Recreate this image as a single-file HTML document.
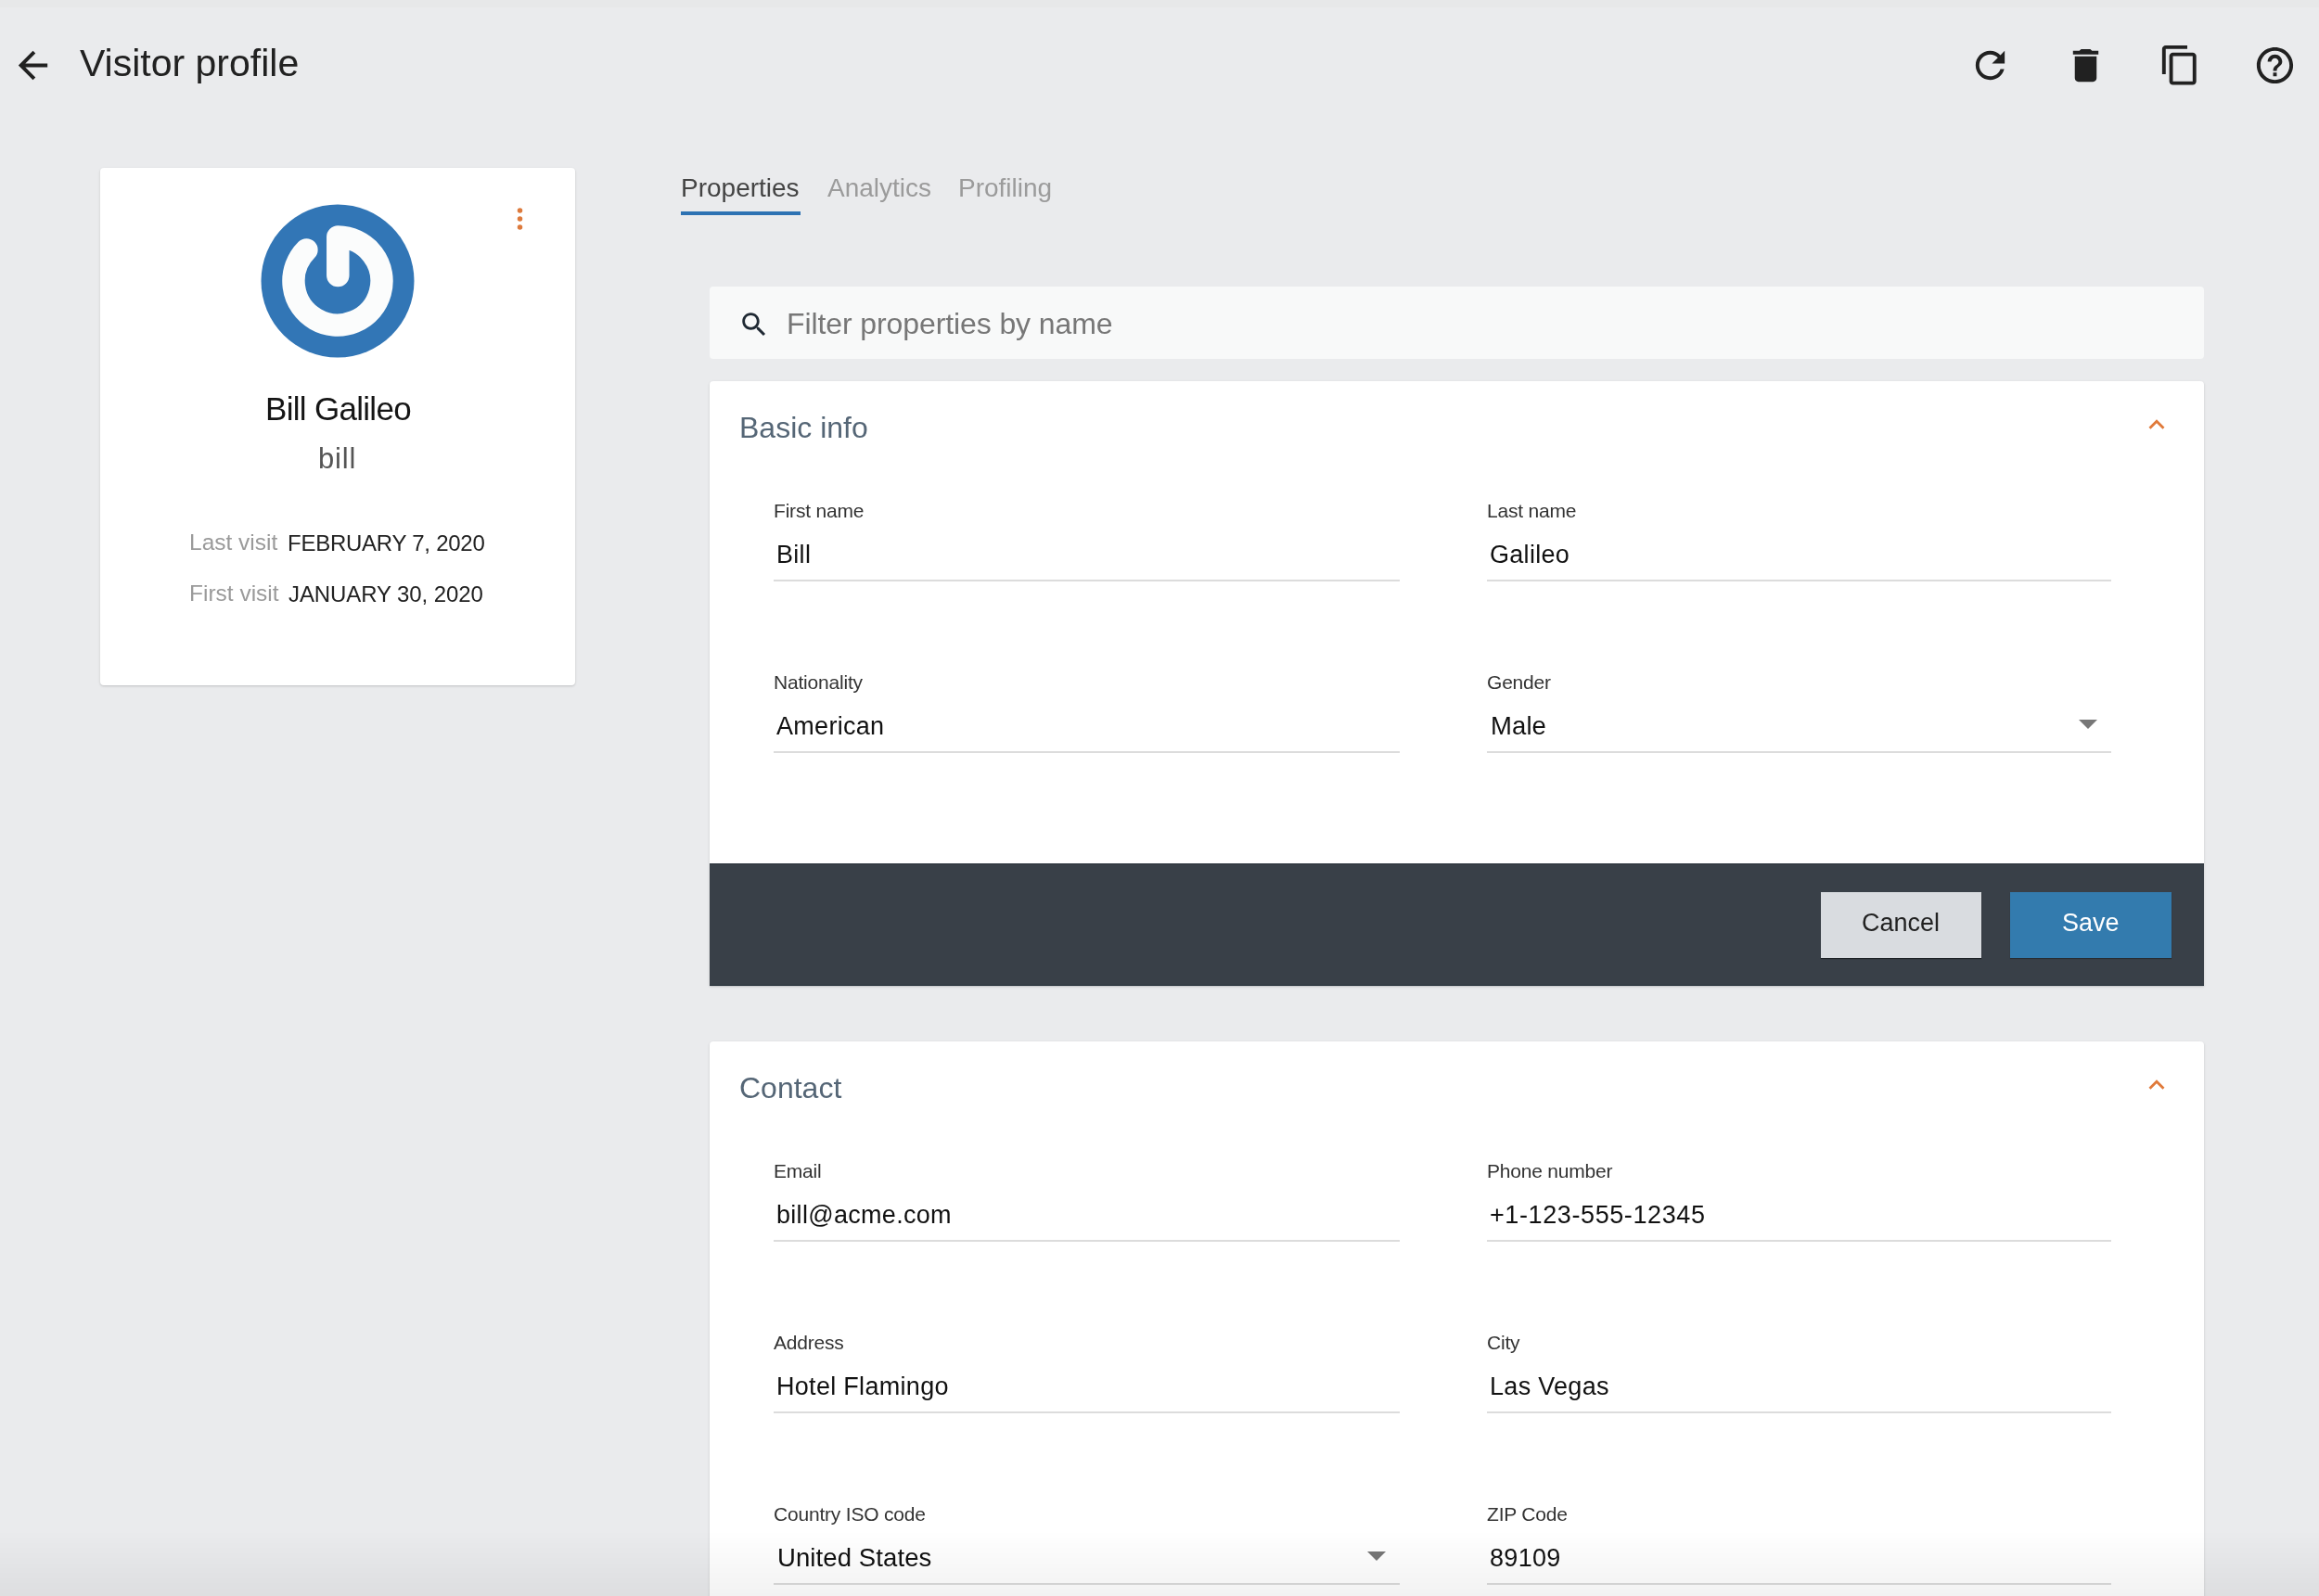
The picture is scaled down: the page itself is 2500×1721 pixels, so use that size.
<!DOCTYPE html>
<html><head><meta charset="utf-8"><title>Visitor profile</title>
<style>
html,body{margin:0;padding:0}
body{width:2500px;height:1721px;overflow:hidden;position:relative;background:#eaebed;font-family:"Liberation Sans",sans-serif}
.t{position:absolute;line-height:1;white-space:nowrap;will-change:transform}
.abs{position:absolute}
.card{position:absolute;background:#fff;border-radius:4px;box-shadow:0 1px 3px rgba(0,0,0,0.14),0 1px 1px rgba(0,0,0,0.05)}
.ul{position:absolute;height:2px;background:#dcdcdc}
svg{position:absolute;overflow:visible}
</style></head><body>
<div class="abs" style="left:0;top:0;width:2500px;height:8px;background:#e7e8e9"></div>
<svg style="left:12px;top:47.4px" width="47" height="47" viewBox="0 0 24 24"><path fill="#212121" d="M20 11H7.83l5.59-5.59L12 4l-8 8 8 8 1.41-1.41L7.83 13H20v-2z"/></svg>
<div class="t" style="left:86.0px;top:48.4px;font-size:41px;color:#212121;">Visitor profile</div>
<svg style="left:2122.4px;top:47.2px" width="47" height="47" viewBox="0 0 24 24"><path fill="#212121" d="M17.65 6.35C16.2 4.9 14.21 4 12 4c-4.42 0-7.99 3.58-7.99 8s3.57 8 7.99 8c3.73 0 6.84-2.55 7.73-6h-2.08c-.82 2.33-3.04 4-5.65 4-3.31 0-6-2.69-6-6s2.69-6 6-6c1.66 0 3.14.69 4.22 1.78L13 11h7V4l-2.35 2.35z"/></svg>
<svg style="left:2224.7px;top:46.5px" width="47" height="47" viewBox="0 0 24 24"><path fill="#212121" d="M6 19c0 1.1.9 2 2 2h8c1.1 0 2-.9 2-2V7H6v12zM19 4h-3.5l-1-1h-5l-1 1H5v2h14V4z"/></svg>
<svg style="left:2326.9px;top:47px" width="46.5" height="46.5" viewBox="0 0 24 24"><path fill="#212121" d="M16 1H4c-1.1 0-2 .9-2 2v14h2V3h12V1zm3 4H8c-1.1 0-2 .9-2 2v14c0 1.1.9 2 2 2h11c1.1 0 2-.9 2-2V7c0-1.1-.9-2-2-2zm0 16H8V7h11v14z"/></svg>
<svg style="left:2429px;top:47.1px" width="47" height="47" viewBox="0 0 24 24"><path fill="#212121" d="M11 18h2v-2h-2v2zm1-16C6.48 2 2 6.48 2 12s4.48 10 10 10 10-4.48 10-10S17.52 2 12 2zm0 18c-4.41 0-8-3.59-8-8s3.59-8 8-8 8 3.59 8 8-3.59 8-8 8zm0-14c-2.21 0-4 1.79-4 4h2c0-1.1.9-2 2-2s2 .9 2 2c0 2-3 1.75-3 5h2c0-2.25 3-2.5 3-5 0-2.21-1.79-4-4-4z"/></svg>
<div class="card" style="left:108px;top:181px;width:512px;height:558px"></div>
<svg style="left:281px;top:220px" width="166" height="166" viewBox="-83 -83 166 166">
<circle cx="0" cy="0" r="82.5" fill="#3276b6"/>
<path d="M-33.6 -33.6 A47.5 47.5 0 1 0 0.3 -47.5 L 0.3 -6" fill="none" stroke="#fbfcfc" stroke-width="24.5" stroke-linecap="round" stroke-linejoin="round"/>
</svg>
<svg style="left:550px;top:215px" width="21" height="42" viewBox="550 215 21 42"><circle cx="560.5" cy="227.0" r="2.75" fill="#dd7a3c"/><circle cx="560.5" cy="236.0" r="2.75" fill="#dd7a3c"/><circle cx="560.5" cy="245.0" r="2.75" fill="#dd7a3c"/></svg>
<div class="t" style="left:286.0px;top:422.6px;font-size:35px;color:#151515;letter-spacing:-0.7px;">Bill Galileo</div>
<div class="t" style="left:343.0px;top:478.9px;font-size:31px;color:#555555;letter-spacing:0.8px;">bill</div>
<div class="t" style="left:204.0px;top:573.3px;font-size:24.5px;color:#9a9a9a;">Last visit</div>
<div class="t" style="left:310.0px;top:573.7px;font-size:24px;color:#222222;letter-spacing:-0.25px;">FEBRUARY 7, 2020</div>
<div class="t" style="left:204.0px;top:628.3px;font-size:24.5px;color:#9a9a9a;">First visit</div>
<div class="t" style="left:311.0px;top:628.7px;font-size:24px;color:#222222;letter-spacing:-0.1px;">JANUARY 30, 2020</div>
<div class="t" style="left:734.0px;top:188.7px;font-size:28px;color:#444444;">Properties</div>
<div class="t" style="left:892.0px;top:188.7px;font-size:28px;color:#9b9b9b;">Analytics</div>
<div class="t" style="left:1033.0px;top:188.7px;font-size:28px;color:#9b9b9b;">Profiling</div>
<div class="abs" style="left:734px;top:228px;width:129px;height:4px;background:#2d72b3"></div>
<div class="abs" style="left:765px;top:309px;width:1611px;height:78px;background:#f8f9f9;border-radius:4px"></div>
<svg style="left:795.8px;top:332.8px" width="34" height="34" viewBox="0 0 24 24"><path fill="#1f2933" d="M15.5 14h-.79l-.28-.27C15.41 12.59 16 11.11 16 9.5 16 5.91 13.09 3 9.5 3S3 5.91 3 9.5 5.91 16 9.5 16c1.61 0 3.09-.59 4.23-1.57l.27.28v.79l5 4.99L20.49 19l-4.99-5zm-6 0C7.01 14 5 11.99 5 9.5S7.01 5 9.5 5 14 7.01 14 9.5 11.99 14 9.5 14z"/></svg>
<div class="t" style="left:848.0px;top:332.9px;font-size:32px;color:#777777;letter-spacing:-0.1px;">Filter properties by name</div>
<div class="card" style="left:765px;top:411px;width:1611px;height:652.4000000000001px;overflow:hidden;border-radius:4px 4px 0 0"><div class="abs" style="left:0;top:519.8px;width:1611px;height:132.6px;background:#394048;border-top:1px solid #2a323b;border-bottom:1px solid #1f2a33;box-sizing:border-box"></div></div>
<div class="t" style="left:797.0px;top:444.6px;font-size:32px;color:#556676;">Basic info</div>
<svg style="left:2307.9px;top:441.2px" width="34" height="34" viewBox="0 0 24 24"><path fill="#e07a3a" d="M12 8l-6 6 1.41 1.41L12 10.83l4.59 4.58L18 14z"/></svg>
<div class="t" style="left:834.0px;top:539.8px;font-size:21px;color:#333333;letter-spacing:-0.2px;">First name</div>
<div class="t" style="left:837.0px;top:584.5px;font-size:27px;color:#111111;letter-spacing:0.3px;">Bill</div>
<div class="ul" style="left:834px;top:625.4px;width:674.6px"></div>
<div class="t" style="left:1603.0px;top:539.8px;font-size:21px;color:#333333;letter-spacing:-0.2px;">Last name</div>
<div class="t" style="left:1606.0px;top:584.5px;font-size:27px;color:#111111;letter-spacing:0.3px;">Galileo</div>
<div class="ul" style="left:1603px;top:625.4px;width:673.0px"></div>
<div class="t" style="left:834.0px;top:724.8px;font-size:21px;color:#333333;letter-spacing:-0.2px;">Nationality</div>
<div class="t" style="left:837.0px;top:769.5px;font-size:27px;color:#111111;letter-spacing:0.3px;">American</div>
<div class="ul" style="left:834px;top:810.4px;width:674.6px"></div>
<div class="t" style="left:1603.0px;top:724.8px;font-size:21px;color:#333333;letter-spacing:-0.2px;">Gender</div>
<div class="t" style="left:1607.0px;top:769.1px;font-size:27.5px;color:#111111;letter-spacing:0.1px;">Male</div>
<div class="abs" style="left:2241.0px;top:776.1px;width:0;height:0;border-left:10.25px solid transparent;border-right:10.25px solid transparent;border-top:10.5px solid #777"></div>
<div class="ul" style="left:1603px;top:810.4px;width:673.0px"></div>
<div class="abs" style="left:1962.7px;top:961.9px;width:173.4px;height:71px;background:#d9dce0;box-shadow:0 1px 1px rgba(0,0,0,0.5)"></div>
<div class="t" style="left:2007.0px;top:982.3px;font-size:27px;color:#222222;">Cancel</div>
<div class="abs" style="left:2167.4px;top:961.9px;width:173.5px;height:71px;background:#337bae;box-shadow:0 1px 1px rgba(0,0,0,0.3)"></div>
<div class="t" style="left:2223.0px;top:982.3px;font-size:27px;color:#ffffff;">Save</div>
<div class="card" style="left:765px;top:1123px;width:1611px;height:618px;overflow:hidden;border-radius:4px"></div>
<div class="t" style="left:797.0px;top:1156.6px;font-size:32px;color:#556676;">Contact</div>
<svg style="left:2307.9px;top:1153.2px" width="34" height="34" viewBox="0 0 24 24"><path fill="#e07a3a" d="M12 8l-6 6 1.41 1.41L12 10.83l4.59 4.58L18 14z"/></svg>
<div class="t" style="left:834.0px;top:1251.8px;font-size:21px;color:#333333;letter-spacing:-0.2px;">Email</div>
<div class="t" style="left:837.0px;top:1296.5px;font-size:27px;color:#111111;letter-spacing:0.3px;">bill@acme.com</div>
<div class="ul" style="left:834px;top:1337.4px;width:674.6px"></div>
<div class="t" style="left:1603.0px;top:1251.8px;font-size:21px;color:#333333;letter-spacing:-0.2px;">Phone number</div>
<div class="t" style="left:1606.0px;top:1296.5px;font-size:27px;color:#111111;letter-spacing:0.6px;">+1-123-555-12345</div>
<div class="ul" style="left:1603px;top:1337.4px;width:673.0px"></div>
<div class="t" style="left:834.0px;top:1436.8px;font-size:21px;color:#333333;letter-spacing:-0.2px;">Address</div>
<div class="t" style="left:837.0px;top:1481.5px;font-size:27px;color:#111111;letter-spacing:0.3px;">Hotel Flamingo</div>
<div class="ul" style="left:834px;top:1522.4px;width:674.6px"></div>
<div class="t" style="left:1603.0px;top:1436.8px;font-size:21px;color:#333333;letter-spacing:-0.2px;">City</div>
<div class="t" style="left:1606.0px;top:1481.5px;font-size:27px;color:#111111;letter-spacing:0.3px;">Las Vegas</div>
<div class="ul" style="left:1603px;top:1522.4px;width:673.0px"></div>
<div class="t" style="left:834.0px;top:1621.8px;font-size:21px;color:#333333;letter-spacing:-0.2px;">Country ISO code</div>
<div class="t" style="left:838.0px;top:1666.1px;font-size:27.5px;color:#111111;letter-spacing:0.1px;">United States</div>
<div class="abs" style="left:1473.6px;top:1673.1px;width:0;height:0;border-left:10.25px solid transparent;border-right:10.25px solid transparent;border-top:10.5px solid #777"></div>
<div class="ul" style="left:834px;top:1707.4px;width:674.6px"></div>
<div class="t" style="left:1603.0px;top:1621.8px;font-size:21px;color:#333333;letter-spacing:-0.2px;">ZIP Code</div>
<div class="t" style="left:1606.0px;top:1666.5px;font-size:27px;color:#111111;letter-spacing:0.3px;">89109</div>
<div class="ul" style="left:1603px;top:1707.4px;width:673.0px"></div>
<div class="abs" style="left:0;top:1650px;width:2500px;height:71px;background:linear-gradient(rgba(0,0,0,0),rgba(0,0,0,0.05))"></div>
</body></html>
